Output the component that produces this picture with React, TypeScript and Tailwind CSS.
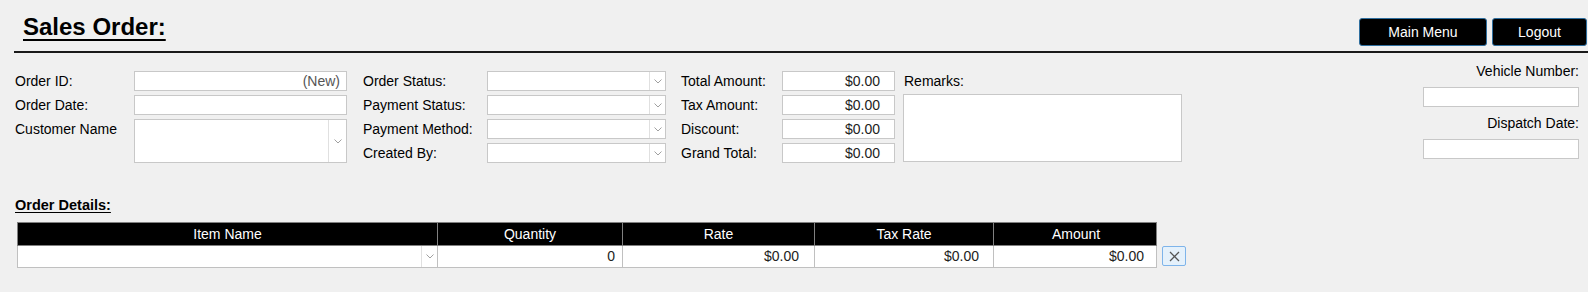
import React from "react";

const Chevron = () => (
  <svg width="8" height="5" viewBox="0 0 8 5" fill="none">
    <path d="M0.5 0.5 L4 4 L7.5 0.5" stroke="#a0a0a0" strokeWidth="1" />
  </svg>
);

function TextBox({ value, className }: { value?: string; className: string }) {
  return (
    <div
      className={`flex h-[20px] items-center justify-end border border-[#c8c8c8] bg-white text-[14px] leading-[18px] ${className}`}
    >
      {value}
    </div>
  );
}

function Select({ className }: { className: string }) {
  return (
    <div className={`flex h-[20px] border border-[#c8c8c8] bg-white ${className}`}>
      <div className="flex-1" />
      <div className="flex w-[16px] items-center justify-center border-l border-[#e0e0e0]">
        <Chevron />
      </div>
    </div>
  );
}

function Label({ children }: { children: React.ReactNode }) {
  return <div className="h-[20px] leading-[20px]">{children}</div>;
}

export default function App() {
  const totals = ["Total Amount:", "Tax Amount:", "Discount:", "Grand Total:"];
  const statuses = ["Order Status:", "Payment Status:", "Payment Method:", "Created By:"];

  return (
    <div className="min-h-[292px] bg-[#f0f0f0] font-['Liberation_Sans',Arial,sans-serif] text-[14px] text-black">
      {/* header */}
      <div className="flex h-[51px] items-start justify-between">
        <h1 className="ml-[23px] mt-[13px] text-[24px] font-bold leading-[28px] underline decoration-2 underline-offset-[4px]">
          Sales Order:
        </h1>
        <div className="mr-[1px] mt-[18px] flex gap-[5px]">
          <button className="h-[28px] w-[128px] rounded-[3px] border border-[#2f6f9f] bg-black text-[14px] text-white">
            Main Menu
          </button>
          <button className="h-[28px] w-[95px] rounded-[3px] border border-[#2f6f9f] bg-black text-[14px] text-white">
            Logout
          </button>
        </div>
      </div>
      <div className="ml-[14px] h-[2px] bg-[#1a1a1a]" />

      {/* form */}
      <div className="flex items-start pt-[10px]">
        <div className="ml-[15px] mt-[8px] grid grid-cols-[119px_213px] gap-y-[4px]">
          <Label>Order ID:</Label>
          <TextBox value="(New)" className="pr-[6px] text-[#555]" />
          <Label>Order Date:</Label>
          <TextBox className="" />
          <Label>Customer Name</Label>
          <div className="flex h-[44px] border border-[#c8c8c8] bg-white">
            <div className="flex-1" />
            <div className="flex w-[18px] items-center justify-center border-l border-[#e0e0e0]">
              <Chevron />
            </div>
          </div>
        </div>

        <div className="ml-[16px] mt-[8px] grid grid-cols-[124px_179px] gap-y-[4px]">
          {statuses.map((s) => (
            <React.Fragment key={s}>
              <Label>{s}</Label>
              <Select className="" />
            </React.Fragment>
          ))}
        </div>

        <div className="ml-[15px] mt-[8px] grid grid-cols-[101px_113px] gap-y-[4px]">
          {totals.map((t) => (
            <React.Fragment key={t}>
              <Label>{t}</Label>
              <TextBox value="$0.00" className="pr-[14px] text-[#222]" />
            </React.Fragment>
          ))}
        </div>

        <div className="ml-[8px] mt-[8px] w-[279px]">
          <div className="pl-[1px] leading-[20px]">Remarks:</div>
          <div className="mt-[3px] h-[68px] border border-[#c8c8c8] bg-white" />
        </div>

        <div className="ml-auto mr-[9px] flex w-[156px] flex-col items-end">
          <div className="leading-[16px]">Vehicle Number:</div>
          <TextBox className="mt-[8px] w-full" />
          <div className="mt-[8px] leading-[16px]">Dispatch Date:</div>
          <TextBox className="mt-[8px] w-full" />
        </div>
      </div>

      {/* order details */}
      <div className="ml-[15px] mt-[32px] text-[14.5px] font-bold leading-[20px] underline underline-offset-[2px]">
        Order Details:
      </div>

      <div className="ml-[17px] mt-[7px] flex items-end gap-[5px]">
        <div className="w-[1140px]">
          <div className="grid h-[24px] grid-cols-[420px_185px_192px_179px_164px] border border-[#808080] bg-black text-[14px] leading-[22px] text-white">
            <div className="border-r border-[#808080] text-center">Item Name</div>
            <div className="border-r border-[#808080] text-center">Quantity</div>
            <div className="border-r border-[#808080] text-center">Rate</div>
            <div className="border-r border-[#808080] text-center">Tax Rate</div>
            <div className="text-center">Amount</div>
          </div>
          <div className="grid h-[22px] grid-cols-[420px_185px_192px_179px_164px] border border-t-0 border-[#c0c0c0] bg-white text-[14px] leading-[21px] text-[#222]">
            <div className="flex justify-end border-r border-[#c0c0c0]">
              <div className="flex w-[16px] items-center justify-center border-l border-[#e0e0e0]">
                <Chevron />
              </div>
            </div>
            <div className="border-r border-[#c0c0c0] pr-[7px] text-right">0</div>
            <div className="border-r border-[#c0c0c0] pr-[15px] text-right">$0.00</div>
            <div className="border-r border-[#c0c0c0] pr-[14px] text-right">$0.00</div>
            <div className="pr-[14px] text-right">$0.00</div>
          </div>
        </div>
        <button className="mb-[2px] flex h-[20px] w-[24px] items-center justify-center rounded-[2px] border border-[#7eb4ea] bg-[#e5f1fb]">
          <svg width="11" height="11" viewBox="0 0 11 11">
            <path d="M1 1 L10 10 M10 1 L1 10" stroke="#555" strokeWidth="1.3" />
          </svg>
        </button>
      </div>
    </div>
  );
}
